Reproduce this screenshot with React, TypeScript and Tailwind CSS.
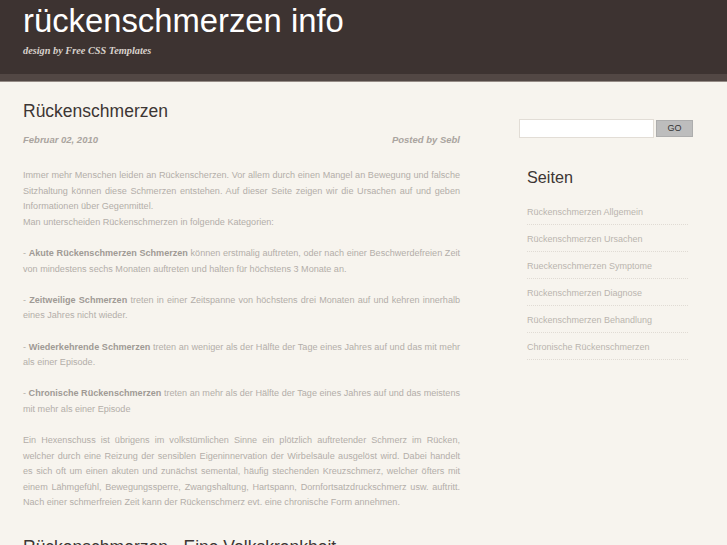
import React from 'react';

const pages = [
  "Rückenschmerzen Allgemein",
  "Rückenschmerzen Ursachen",
  "Rueckenschmerzen Symptome",
  "Rückenschmerzen Diagnose",
  "Rückenschmerzen Behandlung",
  "Chronische Rückenschmerzen",
];

function Header() {
  return (
    <div>
      <div className="h-[74px] bg-[#3d3331] px-[23px] pt-[4px]">
        <h1 className="text-[32.8px] leading-[34px] text-white">rückenschmerzen info</h1>
        <p className="mt-[7px] font-['Liberation_Serif',serif] text-[10.3px] font-bold italic leading-[12px] text-[#d9d2cc]">
          design by Free CSS Templates
        </p>
      </div>
      <div className="h-[7px] bg-[#524744]" />
      <div className="h-px bg-[#958b86]" />
    </div>
  );
}

function Post() {
  return (
    <div className="w-[437px]">
      <h2 className="text-[17.5px] leading-[22px] text-[#3d3634]">Rückenschmerzen</h2>
      <div className="mt-[12px] flex justify-between text-[9.5px] font-bold italic leading-[12px] text-[#aaa49f]">
        <span>Februar 02, 2010</span>
        <span>Posted by Sebl</span>
      </div>
      <div className="mt-[22px] text-justify text-[9.08px] leading-[15.6px] text-[#b3aea9] [&_b]:text-[#a09a95]">
        Immer mehr Menschen leiden an Rückenscherzen. Vor allem durch einen Mangel an Bewegung und falsche Sitzhaltung können diese Schmerzen entstehen. Auf dieser Seite zeigen wir die Ursachen auf und geben Informationen über Gegenmittel.
        <br />
        Man unterscheiden Rückenschmerzen in folgende Kategorien:
        <br />
        <br />
        - <b>Akute Rückenschmerzen Schmerzen</b> können erstmalig auftreten, oder nach einer Beschwerdefreien Zeit von mindestens sechs Monaten auftreten und halten für höchstens 3 Monate an.
        <br />
        <br />
        - <b>Zeitweilige Schmerzen</b> treten in einer Zeitspanne von höchstens drei Monaten auf und kehren innerhalb eines Jahres nicht wieder.
        <br />
        <br />
        - <b>Wiederkehrende Schmerzen</b> treten an weniger als der Hälfte der Tage eines Jahres auf und das mit mehr als einer Episode.
        <br />
        <br />
        - <b>Chronische Rückenschmerzen</b> treten an mehr als der Hälfte der Tage eines Jahres auf und das meistens mit mehr als einer Episode
        <br />
        <br />
        Ein Hexenschuss ist übrigens im volkstümlichen Sinne ein plötzlich auftretender Schmerz im Rücken, welcher durch eine Reizung der sensiblen Eigeninnervation der Wirbelsäule ausgelöst wird. Dabei handelt es sich oft um einen akuten und zunächst semental, häufig stechenden Kreuzschmerz, welcher öfters mit einem Lähmgefühl, Bewegungssperre, Zwangshaltung, Hartspann, Dornfortsatzdruckschmerz usw. auftritt. Nach einer schmerfreien Zeit kann der Rückenschmerz evt. eine chronische Form annehmen.
      </div>
      <h2 className="mt-[25px] text-[17.5px] leading-[22px] text-[#3d3634]">Rückenschmerzen - Eine Volkskrankheit</h2>
    </div>
  );
}

function Sidebar() {
  return (
    <div className="w-[175px] pt-[19px]">
      <div className="flex items-center gap-[2px]">
        <div className="h-[19px] w-[135px] border border-[#e2ddd6] bg-white" />
        <button className="h-[17px] w-[37px] border border-[#adadad] bg-[#bdbdbd] text-[9px] leading-none text-[#333]">
          GO
        </button>
      </div>
      <div className="pl-[8px]">
        <h3 className="mt-[29px] text-[16.2px] leading-[20px] text-[#3d3634]">Seiten</h3>
        <ul className="mt-[11px] w-[161px]">
          {pages.map((p) => (
            <li key={p} className="border-b border-dotted border-[#e0dbd4] pb-[8px] pt-[10px] text-[9px] leading-[8px] text-[#bab4ae]">
              {p}
            </li>
          ))}
        </ul>
      </div>
    </div>
  );
}

export default function App() {
  return (
    <div className="h-[545px] overflow-hidden bg-[#f7f4ee] font-['Liberation_Sans',Arial,sans-serif]">
      <Header />
      <div className="flex gap-[59px] px-[23px] pt-[18px]">
        <Post />
        <Sidebar />
      </div>
    </div>
  );
}
